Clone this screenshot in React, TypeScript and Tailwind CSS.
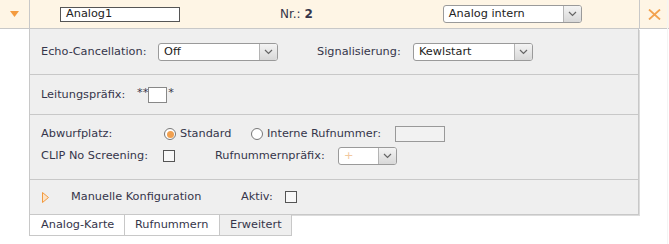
import React from 'react';

function Chevron() {
  return (
    <svg width="9" height="6" viewBox="0 0 9 6" fill="none">
      <polyline points="1,1 4.5,4.5 8,1" stroke="#666" strokeWidth="1.2" fill="none" />
    </svg>
  );
}

function Select({ value, w, disabled = false }: { value: string; w: string; disabled?: boolean }) {
  return (
    <div className={`${w} h-[18px] flex border border-[#9a9a9a] rounded-[3px] bg-white overflow-hidden`}>
      <div className={`flex-1 flex items-center pl-[5px] ${disabled ? 'text-[#f2c9a0]' : 'text-[#222]'}`}>{value}</div>
      <div className="w-[18px] flex items-center justify-center border-l border-[#b4b4b4] bg-gradient-to-b from-[#f4f4f4] to-[#d8d8d8]">
        <Chevron />
      </div>
    </div>
  );
}

function Checkbox() {
  return <div className="w-[12px] h-[12px] border border-[#555] bg-[#f8f8f8]" />;
}

function Radio({ checked }: { checked?: boolean }) {
  return (
    <div className="w-[12px] h-[12px] rounded-full border border-[#777] bg-white flex items-center justify-center">
      {checked && <div className="w-[7px] h-[7px] rounded-full bg-[#f0a050]" />}
    </div>
  );
}

export default function App() {
  return (
    <div className="w-[669px] h-[244px] bg-white text-[11.3px] text-[#35354a] font-['DejaVu_Sans',sans-serif] leading-none">
      {/* Kopfzeile */}
      <div className="flex h-[29px] border-b border-[#c8c8c8] bg-[#fef5e5]">
        <div className="w-[30px] border-r border-[#c8c8c8] flex items-center justify-center">
          <svg width="9" height="6" viewBox="0 0 9 6"><polygon points="0,0 9,0 4.5,6" fill="#f49b3f" /></svg>
        </div>
        <div className="w-[609px] flex items-center">
          <div className="ml-[30px] w-[120px] h-[15px] border border-[#555] bg-white flex items-center pl-[5px] text-[#222]">Analog1</div>
          <div className="ml-[100px] text-[12px]">Nr.: <span className="font-bold">2</span></div>
          <div className="ml-[130px]"><Select value="Analog intern" w="w-[139px]" /></div>
        </div>
        <div className="flex-1 border-l border-[#c8c8c8] flex items-center justify-center">
          <svg width="13" height="11" viewBox="0 0 13 11"><path d="M1 0.5 L12 10.5 M12 0.5 L1 10.5" stroke="#f3a24f" strokeWidth="1.8" /></svg>
        </div>
      </div>

      <div className="flex">
        <div className="w-[29px]" />
        <div className="flex flex-col">
          <div className="w-[610px] bg-[#efefef] border-l border-r border-b border-[#c8c8c8] shadow-[1px_1px_0_#dcdcdc]">
            {/* Echo / Signalisierung */}
            <div className="h-[46px] border-b border-[#c8c8c8] flex items-center pl-[11px]">
              <span className="w-[117px]">Echo-Cancellation:</span>
              <Select value="Off" w="w-[120px]" />
              <span className="ml-[39px] w-[96px]">Signalisierung:</span>
              <Select value="Kewlstart" w="w-[120px]" />
            </div>
            {/* Leitungspräfix */}
            <div className="h-[40px] border-b border-[#c8c8c8] flex items-center pl-[11px]">
              <span className="w-[96px]">Leitungspräfix:</span>
              <span className="mt-[-3px]">**</span>
              <div className="w-[19px] h-[16px] border border-[#888] bg-white" />
              <span className="mt-[-3px] ml-[1px]">*</span>
            </div>
            {/* Abwurfplatz / CLIP */}
            <div className="h-[65px] border-b border-[#c8c8c8] flex flex-col pt-[9px] gap-[2px] pl-[11px]">
              <div className="h-[20px] flex items-center">
                <span className="w-[123px]">Abwurfplatz:</span>
                <Radio checked />
                <span className="ml-[4px] w-[71px]">Standard</span>
                <Radio />
                <span className="ml-[4px] w-[128px]">Interne Rufnummer:</span>
                <div className="w-[50px] h-[16px] border border-[#999] bg-[#f2f2f2]" />
              </div>
              <div className="h-[20px] flex items-center">
                <span className="w-[122px]">CLIP No Screening:</span>
                <Checkbox />
                <span className="ml-[40px] w-[123px]">Rufnummernpräfix:</span>
                <Select value="+" w="w-[59px]" disabled />
              </div>
            </div>
            {/* Manuelle Konfiguration */}
            <div className="h-[34px] flex items-center pl-[12px]">
              <svg width="7" height="11" viewBox="0 0 7 11"><polygon points="0.5,0.5 6.5,5.5 0.5,10.5" fill="#fbe3c8" stroke="#f29a3e" strokeWidth="1" /></svg>
              <span className="ml-[22px] w-[170px]">Manuelle Konfiguration</span>
              <span className="w-[44px]">Aktiv:</span>
              <Checkbox />
            </div>
          </div>
          {/* Tabs */}
          <div className="flex h-[21px]">
            <div className="w-[96px] border-l border-r border-b border-[#c8c8c8] bg-white flex items-center pl-[11px]">Analog-Karte</div>
            <div className="w-[95px] border-r border-b border-[#c8c8c8] bg-white flex items-center pl-[10px]">Rufnummern</div>
            <div className="w-[72px] border-r border-b border-[#c8c8c8] bg-[#efefef] flex items-center pl-[10px]">Erweitert</div>
          </div>
        </div>
        <div className="flex-1" />
        <div className="w-px h-[244px] bg-[#f4f4f4] mt-[-29px] mr-[1px]" />
      </div>
    </div>
  );
}
